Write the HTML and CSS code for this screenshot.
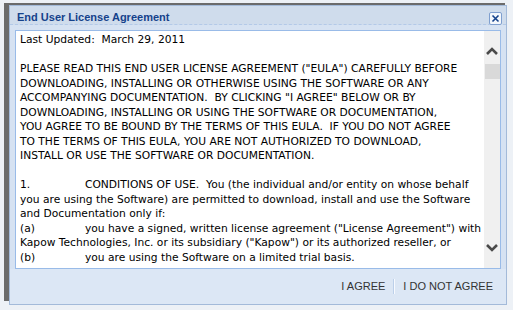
FILE: index.html
```html
<!DOCTYPE html>
<html lang="en">
<head>
    <meta charset="UTF-8">
    <title>End User License Agreement</title>
    <link rel="stylesheet" href="styles.css">
</head>
<body>
    <div class="win">
        <div class="win-head">
            <span class="win-title">End User License Agreement</span>
            <span class="win-close">
                <svg width="11" height="11" viewBox="0 0 11 11"><path d="M2.5 2.5 L8.5 8.5 M8.5 2.5 L2.5 8.5" stroke="#15428b" stroke-width="1.6" fill="none"/></svg>
            </span>
        </div>
        <div class="eula">
            <div class="eula-text">
                <p>Last Updated:&nbsp; March 29, 2011</p>
                <p>PLEASE READ THIS END USER LICENSE AGREEMENT ("EULA") CAREFULLY BEFORE<br>
                DOWNLOADING, INSTALLING OR OTHERWISE USING THE SOFTWARE OR ANY<br>
                ACCOMPANYING DOCUMENTATION.&nbsp; BY CLICKING "I AGREE" BELOW OR BY<br>
                DOWNLOADING, INSTALLING OR USING THE SOFTWARE OR DOCUMENTATION,<br>
                YOU AGREE TO BE BOUND BY THE TERMS OF THIS EULA.&nbsp; IF YOU DO NOT AGREE<br>
                TO THE TERMS OF THIS EULA, YOU ARE NOT AUTHORIZED TO DOWNLOAD,<br>
                INSTALL OR USE THE SOFTWARE OR DOCUMENTATION.</p>
                <p><span class="tab">1.</span>CONDITIONS OF USE.&nbsp; You (the individual and/or entity on whose behalf<br>
                you are using the Software) are permitted to download, install and use the Software<br>
                and Documentation only if:<br>
                <span class="tab">(a)</span>you have a signed, written license agreement ("License Agreement") with<br>
                Kapow Technologies, Inc. or its subsidiary ("Kapow") or its authorized reseller, or<br>
                <span class="tab">(b)</span>you are using the Software on a limited trial basis.</p>
            </div>
            <div class="scroll">
                <svg class="arrow-up" width="16" height="10" viewBox="0 0 16 10"><polyline points="3,8 8,3 13,8" stroke="#4a4a4a" stroke-width="2.6" fill="none"/></svg>
                <div class="thumb"></div>
                <div class="track"></div>
                <svg class="arrow-down" width="16" height="10" viewBox="0 0 16 10"><polyline points="3,2 8,7 13,2" stroke="#4a4a4a" stroke-width="2.6" fill="none"/></svg>
            </div>
        </div>
        <div class="win-foot">
            <a class="btn">I AGREE</a>
            <span class="sep"></span>
            <a class="btn">I DO NOT AGREE</a>
        </div>
    </div>
</body>
</html>
```

FILE: styles.css
```css
* {margin: 0; padding: 0; box-sizing: border-box;}
body {
    background: #edf1f6;
    font-family: "Liberation Sans", Arial, sans-serif;
    font-size: 11px;
}
.win {
    position: relative;
    width: 498px;
    height: 300px;
    margin: 5px 0 0 9px;
    background: #d6e2f2;
    border: 1px solid #a3bad9;
    display: flex;
    flex-direction: column;
}
/* dark backdrop peeking out on the top/left */
.win::before {
    content: "";
    position: absolute;
    left: -6px;
    top: -3px;
    right: 1px;
    bottom: 3px;
    background: #6b6b6b;
    z-index: -1;
}
.win-head {
    height: 19px;
    padding: 5px 4px 0 7px;
    display: flex;
    align-items: flex-start;
    background: #cfdcec;
    border-bottom: 1px dashed #b3c9e8;
}
.win-title {
    flex: 1;
    line-height: 13px;
    font-weight: bold;
    color: #15428b;
}
.win-close {
    width: 13px;
    height: 13px;
    margin-top: 1px;
    border: 1px solid #7f9fcf;
    background: #f3f7fc;
    border-radius: 2px;
    display: flex;
}
.eula {
    height: 239px;
    margin: 5px 5px 0 5px;
    border: 1px solid #99bbe8;
    background: #fff;
    display: flex;
}
.eula-text {
    flex: 1;
    padding: 2px 4px;
    overflow: hidden;
    white-space: nowrap;
    font-family: "DejaVu Sans", Tahoma, sans-serif;
    font-size: 10.7px;
    line-height: 14.5px;
    color: #000;
}
.eula-text p {
    margin-bottom: 14.5px;
}
.tab {
    display: inline-block;
    width: 65px;
}
.scroll {
    width: 16px;
    background: #f0f0f0;
    display: flex;
    flex-direction: column;
}
.arrow-up {
    margin-top: 15px;
    display: block;
}
.thumb {
    height: 15px;
    margin: 8px 0 0 1px;
    background: #d9d9d9;
}
.track {flex: 1;}
.arrow-down {
    margin-bottom: 15px;
    display: block;
}
.win-foot {
    flex: 1;
    display: flex;
    justify-content: flex-end;
    align-items: center;
    padding: 0 13px 1px 0;
    background: #dce7f5;
}
.btn {
    color: #333;
    cursor: pointer;
}
.sep {
    width: 2px;
    height: 15px;
    margin: 0 8px;
    border-left: 1px solid #bcd0ea;
    border-right: 1px solid #f7faff;
}
```
